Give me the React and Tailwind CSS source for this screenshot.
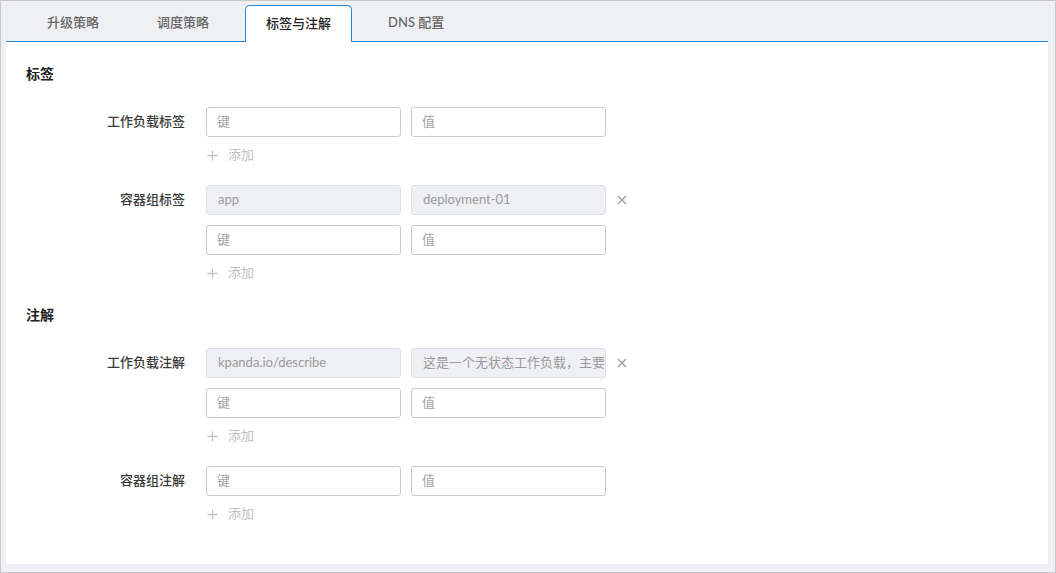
import React from "react";

const FONT = { fontFamily: '"Lato","Noto Sans CJK SC",sans-serif' };

function Plus() {
  return (
    <svg width="11" height="11" viewBox="0 0 11 11" className="shrink-0">
      <path d="M5.5 0.5v10M0.5 5.5h10" stroke="#c4c4c4" strokeWidth="1.3" fill="none" />
    </svg>
  );
}

function Close() {
  return (
    <svg width="10" height="10" viewBox="0 0 10 10" className="shrink-0">
      <path d="M1 1l8 8M9 1l-8 8" stroke="#9c9c9c" strokeWidth="1.4" fill="none" />
    </svg>
  );
}

function EmptyInput({ ph }) {
  return (
    <div className="w-[195px] h-[30px] border border-[#c9ccd4] rounded-[3px] bg-white pl-[10px] flex items-center text-[13px] text-[#a3a3a3]">
      {ph}
    </div>
  );
}

function FilledInput({ value }) {
  return (
    <div className="w-[195px] h-[30px] border border-[#dfe1e6] rounded-[3px] bg-[#eff0f4] pl-[11px] flex items-center text-[13px] text-[#9b9b9b] overflow-hidden whitespace-nowrap">
      {value}
    </div>
  );
}

function AddLine() {
  return (
    <div className="mt-[8px] h-[20px] flex items-center gap-[10px] pl-[1px] text-[13px] text-[#c0c0c0]">
      <Plus />
      <span>添加</span>
    </div>
  );
}

function Group({ label, filled, className = "" }) {
  return (
    <div className={"flex " + className}>
      <div className="w-[159px] h-[30px] flex items-center justify-end text-[13px] font-medium text-[#3a3a3a]">
        {label}
      </div>
      <div className="ml-[21px] flex flex-col">
        <div className="flex flex-col gap-[10px]">
          {filled && (
            <div className="flex items-center gap-[10px]">
              <FilledInput value={filled[0]} />
              <FilledInput value={filled[1]} />
              <div className="ml-[1px] flex items-center">
                <Close />
              </div>
            </div>
          )}
          <div className="flex items-center gap-[10px]">
            <EmptyInput ph="键" />
            <EmptyInput ph="值" />
          </div>
        </div>
        <AddLine />
      </div>
    </div>
  );
}

export default function App() {
  const tabs = ["升级策略", "调度策略", "标签与注解", "DNS 配置"];
  return (
    <div
      className="w-[1056px] h-[573px] border border-[#c8c8c8] bg-[#eff0f4] flex flex-col overflow-hidden"
      style={FONT}
    >
      <div className="ml-[5px] mr-[7px] flex flex-col flex-1 mb-[8px]">
        <div className="h-[41px] shrink-0 border-b border-[#1e88d9] flex items-end pl-[19px] gap-[14px]">
          {tabs.map((t, i) =>
            i === 2 ? (
              <div
                key={t}
                className="h-[37px] -mb-px px-[20px] flex items-center border border-b-0 border-[#1e88d9] rounded-t-[5px] bg-white text-[13px] font-medium text-[#222]"
              >
                {t}
              </div>
            ) : (
              <div
                key={t}
                className="h-[36px] px-[22px] flex items-center text-[13px] font-medium text-[#666]"
              >
                {t}
              </div>
            )
          )}
        </div>
        <div className="flex-1 bg-white pl-[20px] pt-[21px] flex flex-col">
          <div className="h-[20px] flex items-center text-[14px] font-bold text-[#222]">标签</div>
          <Group label="工作负载标签" className="mt-[24px]" />
          <Group label="容器组标签" filled={["app", "deployment-01"]} className="mt-[20px]" />
          <div className="mt-[21px] h-[20px] flex items-center text-[14px] font-bold text-[#222]">注解</div>
          <Group
            label="工作负载注解"
            filled={["kpanda.io/describe", "这是一个无状态工作负载，主要用于演示"]}
            className="mt-[24px]"
          />
          <Group label="容器组注解" className="mt-[20px]" />
        </div>
      </div>
    </div>
  );
}
